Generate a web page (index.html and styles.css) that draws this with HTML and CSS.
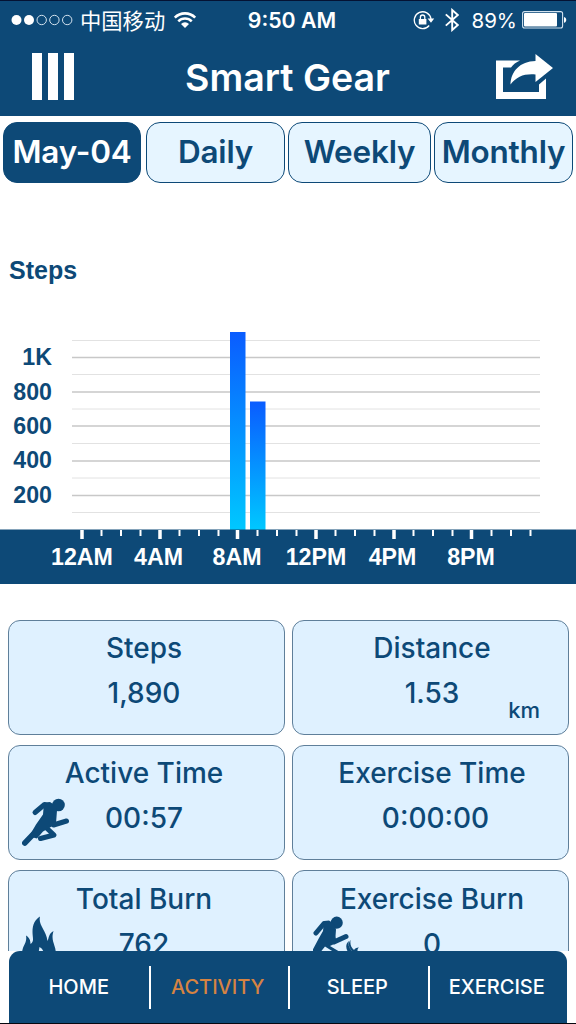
FILE: index.html
```
<!DOCTYPE html>
<html lang="en">
<head>
  <meta charset="UTF-8">
  <meta name="viewport" content="width=device-width, initial-scale=1.0">
  <title>Smart Gear</title>
  <link rel="stylesheet" href="styles.css">
</head>
<body>
<!-- Header -->
<header class="header">
  <div class="status-bar">
    <div class="status-left">
      <svg width="62" height="12" viewBox="0 0 62 12">
        <g fill="#fff"><circle cx="5.5" cy="6" r="5"/><circle cx="18" cy="6" r="5"/></g>
        <g fill="none" stroke="#d3e2ee" stroke-width="1"><circle cx="30.7" cy="6" r="4.7"/><circle cx="43.4" cy="6" r="4.7"/><circle cx="56.2" cy="6" r="4.7"/></g>
      </svg>
      <span class="carrier">中国移动</span>
      <svg class="wifi" width="24" height="18" viewBox="0 0 24 18">
        <g fill="none" stroke="#fff" stroke-width="2.6">
          <path d="M1.8 6.600a14.400 14.400 0 0 1 20.400 0"/>
          <path d="M5.300 10.300a9.500 9.500 0 0 1 13.400 0"/>
        </g>
        <path fill="#fff" d="M8 13a5.700 5.700 0 0 1 8 0l-4 4z"/>
      </svg>
    </div>
    <span class="time">9:50 AM</span>
    <div class="status-right">
      <svg width="22" height="20" viewBox="0 0 22 20">
        <g fill="none" stroke="#fff" stroke-width="1.3">
          <path d="M16.200 15.500A8.400 8.400 0 1 1 18 9"/>
          <path d="M7.400 9.500V7.200a2.200 2.200 0 0 1 4.400 0v2.300"/>
        </g>
        <path fill="#fff" d="M5.800 9h7.600v5.500H5.800zM14.600 8.500h6.600L18 12.800z"/>
      </svg>
      <svg class="bluetooth" width="14" height="24" viewBox="0 0 14 24">
        <path fill="none" stroke="#fff" stroke-width="1.9" d="M.8 6.400l12 10.600-5.600 5V2l5.600 5-12 10.600"/>
      </svg>
      <span class="percent">89%</span>
      <svg class="battery" width="45" height="18" viewBox="0 0 45 18">
        <rect x=".6" y=".6" width="40" height="16.4" rx="2" fill="none" stroke="#d3e2ee" stroke-width="1.1"/>
        <rect x="2" y="2" width="33" height="13.6" rx="1" fill="#fff"/>
        <path fill="#fff" d="M42 6c3 .6 3 5.200 0 5.800z"/>
      </svg>
    </div>
  </div>
  <div class="title-bar">
    <svg class="menu" width="42" height="47" viewBox="0 0 42 47">
      <path fill="#fff" d="M0 0h10v47H0zM16 0h10v47H16zM32 0h10v47H32z"/>
    </svg>
    <h1>Smart Gear</h1>
    <svg class="share" width="57" height="45" viewBox="0 0 57 45">
      <path fill="#fff" d="M0 6.500h24c-4 1.800-7 4-9 7H7V38h36V30.500l7-6V45H0z"/>
      <path fill="#fff" d="M39.500 0L57 14 39.500 28v-7.500c-11-1-19 2-25 10C15 17 24 7.500 39.500 7z"/>
    </svg>
  </div>
</header>

<!-- Period tabs -->
<nav class="tabs">
  <a class="tab active">May-04</a>
  <a class="tab">Daily</a>
  <a class="tab weekly">Weekly</a>
  <a class="tab">Monthly</a>
</nav>

<!-- Steps chart -->
<section class="chart">
  <h2>Steps</h2>
  <svg width="576" height="264" viewBox="0 0 576 264">
    <defs>
      <linearGradient id="barFill" x1="0" y1="0" x2="0" y2="1">
        <stop offset="0" stop-color="#0a5cff"/>
        <stop offset="1" stop-color="#00c8ff"/>
      </linearGradient>
    </defs>
    <path class="grid-minor" d="M72 20.500H540M72 54.500H540M72 89H540M72 123.500H540M72 158H540M72 192.500H540"/>
    <path class="grid-major" d="M72 37.500H540M72 72H540M72 106H540M72 141H540M72 175.500H540"/>
    <rect x="230" y="12" width="15.500" height="198" fill="url(#barFill)"/>
    <rect x="250" y="81.500" width="15.500" height="128.500" fill="url(#barFill)"/>
    <g class="y-labels">
      <text x="52" y="44.500">1K</text>
      <text x="52" y="79.500">800</text>
      <text x="52" y="113.500">600</text>
      <text x="52" y="148">400</text>
      <text x="52" y="183">200</text>
    </g>
    <rect y="209.500" width="576" height="54.500" fill="#0d4977"/>
    <path class="tick-minor" d="M101.500 210v6M121 210v6M140.500 210v6M179.500 210v6M199 210v6M218.500 210v6M257.500 210v6M277 210v6M296.500 210v6M335.500 210v6M355 210v6M374.500 210v6M413.500 210v6M433 210v6M452.500 210v6M491.500 210v6M511 210v6M530.500 210v6"/>
    <path class="tick-major" d="M82 210v9M160 210v9M237.500 210v9M316 210v9M394 210v9M471.500 210v9"/>
    <g class="x-labels">
      <text x="82" y="245">12AM</text>
      <text x="158.500" y="245">4AM</text>
      <text x="237" y="245">8AM</text>
      <text x="316" y="245">12PM</text>
      <text x="392.500" y="245">4PM</text>
      <text x="471" y="245">8PM</text>
    </g>
  </svg>
</section>

<!-- Summary cards -->
<main class="cards">
  <div class="card">
    <h3>Steps</h3>
    <p>1,890</p>
  </div>
  <div class="card">
    <h3>Distance</h3>
    <p>1.53</p>
    <span class="unit">km</span>
  </div>
  <div class="card">
    <h3>Active Time</h3>
    <p>00:57</p>
    <svg class="card-icon" width="50" height="50" viewBox="0 0 50 50">
      <g fill="none" stroke="#0d4977" stroke-linecap="round" stroke-linejoin="round">
        <path stroke-width="5" d="M13 14.500L22.500 6.500l6 3"/>
        <path stroke-width="5" d="M31 20l.5 7 13-4"/>
        <path stroke-width="5" d="M23.500 29l8.500 8-13.500 3.500"/>
        <path stroke-width="5.500" d="M20 27L2.800 45"/>
      </g>
      <circle cx="36.500" cy="7" r="6.300" fill="#0d4977"/>
      <path fill="#0d4977" d="M22 4.500l6-.5q6 3 7 8.500l-1 13-6 4-7 4-6 7-8-2 7-12 7-10z"/>
    </svg>
  </div>
  <div class="card">
    <h3>Exercise Time</h3>
    <p class="duration">0:00:00</p>
  </div>
  <div class="card last">
    <h3>Total Burn</h3>
    <p>762</p>
    <svg class="card-icon burn" width="36" height="50" viewBox="0 0 36 50">
      <path fill="#0d4977" fill-rule="evenodd" d="M18 .5c-2 9 6 13 7.500 24.500 1.500-2 .5-7 6-10-2 7-.5 10 1 15 4 11-2 19-15 19S-2 42 .7 33c1-4 4.500-7 3.300-13.500 3.500 2 4.500 5 4.500 8.500 4-3 2-6 2-12C10.500 8 13 4 18 .5zM17.500 31l-1 6h5c0-3-2-5-4-6z"/>
    </svg>
  </div>
  <div class="card last">
    <h3>Exercise Burn</h3>
    <p>0</p>
    <svg class="card-icon runner-burn" width="50" height="50" viewBox="0 0 50 50">
      <g fill="none" stroke="#0d4977" stroke-linecap="round" stroke-linejoin="round">
        <path stroke-width="5" d="M3 17l8-9.500 6 2"/>
        <path stroke-width="5" d="M19.500 20l1.500 6L33 20.500"/>
      </g>
      <circle cx="23.700" cy="6.700" r="6.100" fill="#0d4977"/>
      <path fill="#0d4977" d="M11 5l5-.5q6 3 7 9l-1 14-5 2.500 10 6v4L12 30.500 6 38l-8-1 8-15 4-7z"/>
      <path fill="#0d4977" d="M37.500 24c-3 4-1.500 8 2 11.500h5c0-2 0-3 1.500-4-3 0-4 1-5 2.500-3-3-4-5-3.500-10zM36 25c-4 3-3 8-1 11h5c-4-3-5-7-4-11z"/>
    </svg>
  </div>
</main>

<!-- Bottom navigation -->
<footer class="bottom">
  <nav class="bottom-nav">
    <a>HOME</a>
    <a class="current">ACTIVITY</a>
    <a>SLEEP</a>
    <a>EXERCISE</a>
  </nav>
</footer>
</body>
</html>
```
FILE: styles.css
```
* {
  box-sizing: border-box;
}
body {
  margin: 0;
  height: 1024px;
  display: flex;
  flex-direction: column;
  overflow: hidden;
  background: #fff;
  color: #0d4977;
  font-family: Inter, "Noto Sans CJK SC", sans-serif;
}
svg {
  display: block;
  flex: none;
}
h1, h2, h3, p {
  margin: 0;
}

/* Header */
.header {
  height: 116px;
  flex: none;
  background: #0d4977;
  color: #fff;
  border-top: 1px solid #041233;
}
.status-bar {
  height: 38px;
  display: grid;
  grid-template-columns: 1fr auto 1fr;
  align-items: center;
  font-size: 21px;
}
.status-left, .status-right {
  display: flex;
  align-items: center;
}
.status-left {
  padding-left: 11px;
}
.status-right {
  justify-content: flex-end;
  padding-right: 9px;
}
.carrier {
  margin-left: 7px;
  font-family: "Noto Sans CJK SC", sans-serif;
  font-size: 21.3px;
  line-height: 30px;
}
.wifi {
  margin-left: 8px;
}
.time {
  padding-left: 8px;
  font-size: 21.3px;
  font-weight: 600;
}
.bluetooth {
  margin-left: 10px;
}
.percent {
  margin-left: 12px;
  font-size: 20.5px;
}
.battery {
  margin-left: 5px;
}
.title-bar {
  height: 77px;
  display: flex;
  justify-content: space-between;
  align-items: center;
  padding: 0 23px 2px 32px;
}
.title-bar h1 {
  padding: 2px 0 0 5px;
  font-size: 37.5px;
  font-weight: 600;
}

/* Period tabs */
.tabs {
  flex: none;
  display: flex;
  gap: 3px;
  padding: 6px 3px 0;
}
.tab {
  width: 139px;
  height: 61px;
  flex: auto;
  border: 1.5px solid #0d4977;
  border-radius: 14px;
  background: #e6f5ff;
  font-size: 31.5px;
  font-weight: 600;
  letter-spacing: -0.2px;
  line-height: 58px;
  text-align: center;
  white-space: nowrap;
}
.tab.active {
  width: 138px;
  margin-right: 2px;
  background: #0d4977;
  color: #fff;
}
.tab.weekly {
  width: 143px;
}

/* Chart */
.chart {
  flex: none;
  padding-top: 72px;
  font-family: "Liberation Sans", Arial, sans-serif;
}
.chart h2 {
  height: 65px;
  padding-left: 9px;
  font-size: 25px;
  line-height: 30px;
}
.grid-minor {
  stroke: #e2e2e2;
}
.grid-major {
  stroke: #c8c8c8;
  stroke-width: 1.3;
}
.tick-minor {
  stroke: #fff;
  stroke-width: 2;
}
.tick-major {
  stroke: #fff;
  stroke-width: 3.5;
}
.y-labels, .x-labels {
  font-size: 23.2px;
  font-weight: bold;
}
.y-labels {
  fill: #0d4977;
  text-anchor: end;
}
.x-labels {
  fill: #fff;
  text-anchor: middle;
}

/* Cards */
.cards {
  height: 367px;
  flex: none;
  overflow: hidden;
  display: grid;
  grid-template-columns: 277px 277px;
  grid-auto-rows: 115px;
  column-gap: 7px;
  row-gap: 10px;
  padding: 36px 7px 0 8px;
}
.card {
  position: relative;
  border: 1px solid #5f7f9a;
  border-radius: 12px;
  background: #dff1ff;
  padding: 11px 5px 0 0;
  text-align: center;
}
.card:nth-child(even) {
  padding: 11px 0 0 3px;
}
.card.last {
  padding-top: 12px;
}
.card h3, .card p {
  font-size: 28px;
  font-weight: 550;
  line-height: 33px;
}
.card p {
  margin-top: 12px;
}
.card .duration {
  padding-left: 7px;
}
.unit {
  position: absolute;
  right: 28px;
  bottom: 11px;
  font-size: 22px;
  font-weight: 500;
}
.card-icon {
  position: absolute;
  left: 13px;
  top: 52px;
}
.card-icon.burn {
  top: 45px;
}
.card-icon.runner-burn {
  left: 20px;
  top: 45px;
}

/* Bottom navigation */
.bottom {
  height: 73px;
  flex: none;
  padding: 0 9px;
  border-bottom: 1px solid #05070f;
}
.bottom-nav {
  height: 72px;
  display: grid;
  grid-template-columns: 1fr 1fr 1fr 1fr;
  align-items: center;
  border-radius: 11px 11px 0 0;
  background: #0d4977;
  color: #fff;
}
.bottom-nav a {
  height: 43px;
  font-size: 20px;
  font-weight: 550;
  line-height: 43px;
  text-align: center;
}
.bottom-nav a + a {
  padding-right: 3px;
  border-left: 2px solid #fff;
}
.bottom-nav .current {
  color: #d68342;
}
```
